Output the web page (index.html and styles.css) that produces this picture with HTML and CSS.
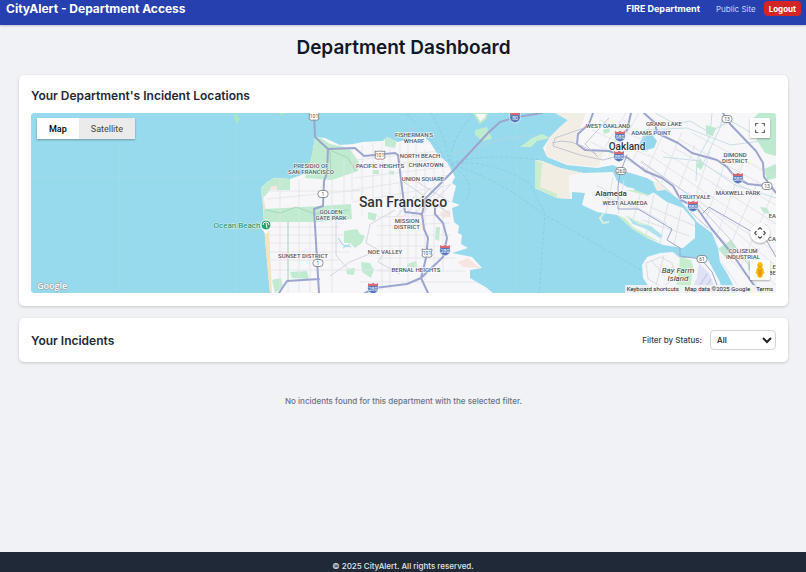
FILE: index.html
```html
<!DOCTYPE html>
<html lang="en">
<head>
<meta charset="utf-8">
<meta name="viewport" content="width=device-width, initial-scale=1">
<title>CityAlert - Department Access</title>
<link rel="stylesheet" href="styles.css">
</head>
<body>
<header class="topbar">
  <span class="brand">CityAlert - Department Access</span>
  <nav class="topnav">
    <span class="dept">FIRE Department</span>
    <a class="public-link" href="#">Public Site</a>
    <button class="logout" type="button">Logout</button>
  </nav>
</header>
<main class="content">
  <h1 class="page-title">Department Dashboard</h1>
  <section class="card">
    <h2 class="card-title">Your Department's Incident Locations</h2>
    <div class="map">
      <svg class="map-canvas" viewBox="31 113 745 180" preserveAspectRatio="xMidYMid slice" role="img" aria-label="Map of San Francisco and Oakland">
        <defs>
          <clipPath id="sf"><path d="M270 293L268 272 265 238 263 205 261 188 267 182 274 178 290 179 307 173 312 155 315 137 325 138 340 145 353 144 363 142 383 141 387 137 398 142 422 135 430 142 438 155 447 162 455 177 452 183 456 186 452 202 460 205 452 208 454 222 459 226 458 233 462 235 461 244 468 248 452 253 472 257 482 268 470 270 470 278 487 288 493 293Z"/></clipPath>
          <clipPath id="east"><path d="M555 113L568 120 560 127 550 137 543 148 547 157 567 165 597 168 613 165 627 172 647 178 660 186 680 200 697 222 712 233 718 248 720 262 728 275 737 293H776V113Z"/></clipPath>
          <g id="interstate"><path d="M-5-5Q-3-3 0-5Q3-3 5-5L5-2Q7 4 0 6Q-7 4-5-2Z" fill="#5378bd" stroke="#fff" stroke-width=".7"/><path d="M-5-5Q-3-3 0-5Q3-3 5-5V-2H-5Z" fill="#d66a70"/></g>
          <g id="us"><path d="M-5-4Q-3-3 0-4Q3-3 5-4Q4 0 5 3Q3 5 0 4Q-3 5-5 3Q-4 0-5-4Z" fill="#fff" stroke="#73777e" stroke-width=".8"/></g>
          <g id="state"><rect x="-5" y="-3.500" width="10" height="7" rx="3" fill="#fff" stroke="#73777e" stroke-width=".8"/></g>
        </defs>
        <rect x="-200" y="0" width="1400" height="420" fill="#98daed"/>
        <path d="M119 113V293M236 113V293M354 113V293M517 113V293M31 177H776" stroke="#a4dceb" stroke-width=".6"/>
        <!-- ferry routes -->
        <path d="M447 162Q435 140 405 113M449 162Q445 135 431 113M450 162Q452 135 475 113M451 163Q485 153 540 160M451 164Q490 158 530 184L545 214 539 293M451 165Q480 184 464 202Q458 208 454 202M451 164Q500 180 540 212L650 275" fill="none" stroke="#82c7dd" stroke-width=".7" stroke-dasharray="3 2"/>
        <path d="M450 155L510 137 542 135" fill="none" stroke="#b5d3e2" stroke-width=".8"/>
        <path d="M234 113L240 118 237 124 234 118M278 113L282 116 284 113" fill="#a9e5bd"/>
        <path d="M474 113L480 123 486 118 487 113Z" fill="#f8f8f5" stroke="#b9e9c7" stroke-width="2"/>
        <path d="M475 130L487 127 492 139 482 141 475 135Z" fill="#bcebd0"/><path d="M520 147L532 138 542 134 550 138 537 141 531 147Z" fill="#c6efd0"/>
        <!-- San Francisco -->
        <g clip-path="url(#sf)">
          <rect x="255" y="113" width="250" height="180" fill="#f7f7f9"/>
          <path d="M261 182L269 230 272 293H269L264 238 261 190Z" fill="#f5e3bb"/>
          <path d="M262 182L279 177 290 179 290 190 270 190 264 197 260 194ZM264 209L320 206 351 204 352 219 316 222 264 222ZM315 134L330 144 349 148 359 162 358 171 332 180 305 178 313 150ZM385 136L397 139 395 148 385 146ZM344 231L357 229 360 234 365 236 362 243 355 248 350 243 344 243ZM368 212L377 214 375 221 368 219ZM346 269L355 268 354 275 347 274ZM361 262L370 263 374 270 371 278 362 272ZM272 280L281 278 283 287 275 293ZM290 272L307 271 309 279 292 278ZM407 264L416 261 418 267 407 267ZM373 170L379 170 379 174 373 174ZM389 171L394 171 394 175 389 174ZM436 227L440 227 439 241 435 239Z" fill="#c1ebd1"/>
          <path d="M270 187L277 185 277 190 270 190ZM440 212L450 210 451 217 442 218ZM457 262L468 258 480 268 463 267Z" fill="#f8e5df"/>
          <path d="M266 191H365M267 199L360 190M268 227H340M269 235H345M269 243H340M269 252H350M270 260H340M270 270H390M280 180V293M288 222V293M299 180V293M310 222V293M332 180V293M344 160V205M352 150V200M362 145V215M373 143V208M382 143V290M390 143V290M400 143V270M408 143V285M416 145V270M425 150V280M434 155V270M443 165V270M355 160L450 150M355 169L452 157M354 178L453 166M352 190L450 175M352 202L450 185M377 217L450 215M377 226L450 223M377 235H450M377 246H453M377 258H455M377 271H465M360 282H480" fill="none" stroke="#e2e3ea" stroke-width=".8"/>
          <path d="M397 216L415 196M404 216L430 188M412 216L442 186M420 216L451 184M404 182L450 214M414 180L450 202M369 225L395 210M370 225L366 243 379 250 350 262 330 276M385 252L378 262 400 274M336 210V255L347 268" fill="none" stroke="#ced1df" stroke-width=".9"/>
          <path d="M266 210L280 213 296 207 315 214 349 210M319 142L332 151 348 158 356 171M330 151L331 175" fill="none" stroke="#9bcdb0" stroke-width=".7"/>
          <path d="M288 222V280" stroke="#a8d9c0" stroke-width="1"/>
          <path d="M338 238L343 245 351 247M343 248L350 244" stroke="#91d6df" stroke-width="1" fill="none"/>
        </g>
        <g fill="none" stroke="#9ca5ce" stroke-width="2" stroke-linejoin="round" stroke-linecap="round">
          <path d="M314 113L315 137 328 149 355 148 364 156 395 153 398 155 405 212 422 214"/>
          <path d="M328 149L327 173 324 181 323 206 314 209 319 293M279 293L287 281 319 279"/>
          <path d="M425 202L422 214 424 229 428 238 426 258 421 278 428 293M365 293L375 288 407 284 421 278 443 257 447 238 443 223 435 214 435 206"/>
          <path d="M424 200L449 175 488 133 500 122 517 117 542 113"/>
        </g>
        <!-- Oakland and Alameda -->
        <g clip-path="url(#east)">
          <rect x="535" y="113" width="245" height="180" fill="#f7f7f9"/>
          <path d="M550 113H586L575 140 580 148 604 151 598 167 567 164 545 156Z" fill="#f2eee6"/>
          <path d="M759 113H776V156L765 153 757 140 750 121ZM706 125L716 128 713 136 706 134ZM700 158L704 164 701 170 696 166ZM764 169L776 164V178L767 180ZM760 207L767 208 770 214 764 213ZM718 249L731 240 736 247 725 257ZM748 260L755 263 756 274 748 270ZM603 130L609 128 610 132 604 134Z" fill="#bceace"/>
          <path d="M643 136L650 132 657 141 654 148 642 151 639 145Z" fill="#94d9eb"/>
          <path d="M600 120L640 139M592 130L650 157M591 142L660 177M626 113L605 147M639 113L615 153M654 118L632 162M667 126L645 174M682 132L661 183M695 145L676 195M710 152L690 213M727 156L705 223M743 163L716 238M758 181L726 255M775 188L741 266M640 162L776 252M648 154L776 240M661 150L776 224M676 149L776 205M680 140L776 192M692 133L776 177M688 192L776 266M699 220L776 285M705 235L765 293M720 260L743 293" fill="none" stroke="#dddfe8" stroke-width=".8"/>
          <path d="M655 113L675 124 690 121 709 132 731 121 750 132M645 130L687 128 731 145 769 140M663 157L700 161 735 185 776 198M712 113L710 136 697 160 696 181M724 113L720 128 702 166" fill="none" stroke="#c6dfe4" stroke-width="1"/>
          <path d="M641 161L689 195 729 238 758 278M642 166L708 228" fill="none" stroke="#c8cbdc" stroke-width="1"/>
        </g>
        <path d="M535 160L542 161 560 168 583 173 613 172 617 181 627 187 653 192 667 202 683 208 695 222 695 238 683 248 663 245 647 238 633 228 617 215 597 212 582 205 585 193 572 192 572 199 557 198 535 188Z" fill="#f5f6f8"/>
        <path d="M535 160L542 161 560 168 583 173 569 175V188L571 199 557 198 535 188Z" fill="#f1ede3"/>
        <path d="M535 160L542 163 540 187 557 194 557 198 535 188ZM617 215L625 218 633 227 647 235 660 242 647 238 632 229ZM625 190L643 190 650 197 641 194Z" fill="#caedce"/>
        <path d="M596 185L667 224M602 196L646 212M606 213L613 177M618 214L624 180M632 224L641 192M646 235L654 194M660 243L668 203M674 246L681 210M642 220L690 236M650 207L695 226" stroke="#dcdfe6" stroke-width=".9"/>
        <path d="M626 173L638 178 648 182 656 191 649 195 635 190 628 182Z" fill="#98daed"/><path d="M653 183L660 182 665 190 657 191Z" fill="#f3eee5"/>
        <path d="M604 213L600 218 603 223 609 222M626 216L635 221 648 226 660 235" fill="none" stroke="#d8efdc" stroke-width="2"/>
        <path d="M628 217L639 224 651 226 663 236 660 238 646 229 633 224Z" fill="#aee2ec"/>
        <!-- Bay Farm Island -->
        <path d="M642 265L647 257 660 253 673 252 680 258 707 258 720 282 722 293H653L643 278Z" fill="#f5f6f8"/>
        <path d="M680 257L691 260 693 266 690 293H675L679 270Z" fill="#c7edcf"/><path d="M699 263L709 273 717 293H690L697 278Z" fill="#dfe1f4"/>
        <path d="M646 263L661 257 672 263 676 278 662 287 648 279ZM651 260L665 277M664 255L656 285" fill="none" stroke="#d6dae1" stroke-width=".9"/>
        <path d="M695 293L707 274M702 293L711 279" stroke="#c4cae5" stroke-width="1.200"/>
        <g fill="none" stroke="#9ca5ce" stroke-width="2" stroke-linejoin="round" stroke-linecap="round">
          <path d="M593 113L589 124 578 134 577 144 585 150 609 151 628 158 645 171 662 178 673 186 681 200 697 208 711 228 733 255 753 284 762 293"/>
          <path d="M631 113L627 130 620 136"/>
          <path d="M644 113L655 123 657 133 678 143 692 153 717 160 727 167 735 177 748 184 766 186"/>
          <path d="M723 113L730 124 756 151 763 163 764 177 776 193"/>
          <path d="M627 155L620 173 618 187V209H638L672 229 667 240 680 248V256L701 259 712 272 720 293" stroke-width="1"/>
          <path d="M703 213L709 207 754 233 764 236 776 257" stroke-width="1"/>
        </g>
        <g fill="none" stroke="#bdbfcf" stroke-width=".9"><path d="M584 128L555 138 553 146 580 155 603 160 618 156M609 118L585 144 598 157M552 143Q570 136 596 154"/></g>
        <!-- route shields -->
        <g class="shield">
          <use href="#us" x="314" y="116"/><text x="314" y="118">101</text>
          <use href="#us" x="380" y="155"/><text x="380" y="157">101</text>
          <use href="#us" x="427" y="253"/><text x="427" y="255">101</text>
          <use href="#state" x="323" y="194"/><text x="323" y="196">1</text>
          <use href="#state" x="318" y="263"/><text x="318" y="265">1</text>
          <use href="#state" x="621" y="171"/><text x="621" y="173">260</text>
          <use href="#state" x="727" y="119"/><text x="727" y="121">13</text>
          <use href="#state" x="767" y="186"/><text x="767" y="188">13</text>
          <use href="#state" x="702" y="259"/><text x="702" y="261">61</text>
        </g>
        <g class="shield shield-light">
          <use href="#interstate" x="515" y="117"/><text x="515" y="120">80</text>
          <use href="#interstate" x="445" y="250"/><text x="445" y="253">280</text>
          <use href="#interstate" x="373" y="288"/><text x="373" y="291">280</text>
          <use href="#interstate" x="620" y="136"/><text x="620" y="139">980</text>
          <use href="#interstate" x="619" y="156"/><text x="619" y="159">880</text>
          <use href="#interstate" x="738" y="178"/><text x="738" y="181">580</text>
          <use href="#interstate" x="693" y="206"/><text x="693" y="209">880</text>
        </g>
        <g class="area">
          <text x="414" y="137">FISHERMAN'S</text><text x="414" y="143">WHARF</text>
          <text x="420" y="158">NORTH BEACH</text><text x="380" y="168">PACIFIC HEIGHTS</text><text x="426" y="167">CHINATOWN</text>
          <text x="423" y="181">UNION SQUARE</text><text x="311" y="168">PRESIDIO OF</text><text x="311" y="174">SAN FRANCISCO</text>
          <text x="331" y="214">GOLDEN</text><text x="331" y="220">GATE PARK</text><text x="407" y="223">MISSION</text><text x="407" y="229">DISTRICT</text>
          <text x="303" y="258">SUNSET DISTRICT</text><text x="385" y="254">NOE VALLEY</text><text x="416" y="272">BERNAL HEIGHTS</text>
          <text x="608" y="128">WEST OAKLAND</text><text x="664" y="126">GRAND LAKE</text><text x="651" y="135">ADAMS POINT</text>
          <text x="735" y="157">DIMOND</text><text x="735" y="163">DISTRICT</text><text x="738" y="195">MAXWELL PARK</text><text x="695" y="199">FRUITVALE</text>
          <text x="625" y="205">WEST ALAMEDA</text><text x="743" y="253">COLISEUM</text><text x="743" y="259">INDUSTRIAL</text>
          <g class="edge"><text x="776" y="218">EA</text><text x="776" y="241">CA</text><text x="776" y="269">E</text><text x="776" y="275">BE</text></g>
        </g>
        <text class="place city-main" x="403" y="207">San Francisco</text>
        <text class="place city" x="627" y="150">Oakland</text>
        <text class="place town" x="611" y="196">Alameda</text>
        <text class="place island" x="678" y="273">Bay Farm</text><text class="place island" x="678" y="281">Island</text>
        <text class="place beach" x="237" y="228">Ocean Beach</text>
        <path d="M266 234L261 228H271Z" fill="#fff"/><circle cx="266" cy="225" r="5" fill="#26a269" stroke="#fff"/>
        <path d="M263 225A3 3 0 0 1 269 225M266 223L267 228" fill="none" stroke="#fff" stroke-width="1"/>
        <text class="google" x="37" y="289">Google</text>
      </svg>
      <div class="map-types">
        <button class="map-type active" type="button">Map</button>
        <button class="map-type" type="button">Satellite</button>
      </div>
      <button class="map-control fullscreen" type="button" aria-label="Toggle fullscreen view">
        <svg viewBox="0 0 18 18" width="10" height="10"><path fill="#666" d="M0 0v6h2V2h4V0H0zm16 0h-4v2h4v4h2V0h-2zm0 16h-4v2h6v-6h-2v4zM2 12H0v6h6v-2H2v-4z"/></svg>
      </button>
      <button class="map-control camera" type="button" aria-label="Map camera controls">
        <svg viewBox="0 0 12 12" width="12" height="12" fill="none" stroke="#555" stroke-width="1.300"><path d="M4 2.500L6 .8 8 2.500M4 9.500L6 11.200 8 9.500M2.500 4L.8 6 2.500 8M9.500 4L11.200 6 9.500 8"/></svg>
      </button>
      <button class="map-control pegman" type="button" aria-label="Street View">
        <svg viewBox="0 0 10 16" width="10" height="16"><path d="M2 6Q5 4 8 6L9.500 11 8 12 7 15.500H3L2 12 .5 11Z" fill="#fbbc04"/><path d="M3 6L5 8 7 6 7 11 6 15H4L3 11Z" fill="#e59a0b"/><circle cx="5" cy="3" r="2.700" fill="#fbbc04"/><path d="M3 4.500Q5 6.500 7 4.500" stroke="#d88b0b" fill="none"/></svg>
      </button>
      <div class="attribution"><a href="#">Keyboard shortcuts</a><span>Map data ©2025 Google</span><a href="#">Terms</a></div>
    </div>
  </section>
  <section class="card incidents">
    <h2 class="card-title">Your Incidents</h2>
    <div class="filter">
      <label for="status">Filter by Status:</label>
      <select id="status"><option>All</option></select>
    </div>
  </section>
  <p class="empty">No incidents found for this department with the selected filter.</p>
</main>
<footer class="footer">© 2025 CityAlert. All rights reserved.</footer>
</body>
</html>
```
FILE: styles.css
```css
* { box-sizing: border-box; }
body {
  display: flex;
  flex-direction: column;
  min-height: 100vh;
  margin: 0;
  background: #f0f2f6;
  color: #111827;
  font-family: Inter, "Liberation Sans", sans-serif;
  font-size: 8px;
}
button, select { font: inherit; }
h1, h2, p { margin: 0; }
a { color: inherit; text-decoration: none; }

.topbar {
  display: flex;
  align-items: center;
  justify-content: space-between;
  padding: 1px 5px 9px 6px;
  background: #2640af;
  color: #fff;
  box-shadow: 0 1px 2px rgba(30, 40, 90, .25);
}
.brand { font-size: 12px; font-weight: 700; line-height: 15px; }
.topnav { display: flex; align-items: center; }
.dept { font-size: 9px; font-weight: 700; margin-right: 16px; }
.public-link { color: #bfdbfe; margin-right: 8px; }
.logout {
  height: 15px;
  padding: 0 5px;
  border: 0;
  border-radius: 4px;
  background: #d42424;
  color: #fff;
  font-weight: 700;
}

.content { flex: 1; padding: 10px 18px 0 19px; }
.page-title {
  margin-bottom: 15px;
  font-size: 19px;
  font-weight: 600;
  line-height: 25px;
  text-align: center;
}
.card {
  margin-bottom: 12px;
  padding: 12px;
  border-radius: 5px;
  background: #fff;
  box-shadow: 0 1px 3px rgba(0, 0, 0, .18);
}
.card-title { color: #1f2937; font-size: 12px; font-weight: 600; line-height: 17px; }

.map {
  position: relative;
  height: 180px;
  margin-top: 9px;
  margin-bottom: 1px;
  overflow: hidden;
  border-radius: 4px;
  background: #98daed;
  font-family: Roboto, sans-serif;
}
.map-canvas { display: block; width: 100%; height: 100%; }
.map-canvas text { text-anchor: middle; font-family: Roboto, sans-serif; }
.area text {
  fill: #50555d;
  font-size: 6px;
  font-weight: 500;
  stroke: #fff;
  stroke-width: 1px;
  paint-order: stroke;
}
.area .edge text { text-anchor: end; }
.shield text { fill: #555; font-size: 5px; }
.shield-light text { fill: #fff; }
.place { fill: #30343a; stroke: #fff; stroke-width: 1px; paint-order: stroke; }
.city-main { font-size: 14px; font-weight: 500; }
.city { font-size: 10px; font-weight: 500; }
.town { font-size: 8px; font-weight: 500; }
.island { font-size: 8px; font-style: italic; }
.beach { fill: #16875b; font-size: 8px; stroke: #d9f2ee; }
.map-canvas .google {
  fill: #fff;
  font-family: "Open Sans", sans-serif;
  font-size: 9px;
  font-weight: 600;
  stroke: #8d9ca3;
  stroke-width: 1px;
  paint-order: stroke;
  text-anchor: start;
}
.map-types {
  position: absolute;
  top: 5px;
  left: 6px;
  display: flex;
  box-shadow: 0 1px 2px rgba(0, 0, 0, .3);
}
.map-type {
  height: 21px;
  padding: 0 12px;
  border: 0;
  background: #ebebeb;
  color: #444;
  font-size: 9px;
}
.map-type.active { background: #fff; color: #000; font-weight: 500; }
.map-control {
  position: absolute;
  right: 6px;
  display: grid;
  place-items: center;
  width: 20px;
  height: 20px;
  padding: 0;
  border: 0;
  border-radius: 1px;
  background: #fff;
  box-shadow: 0 1px 2px rgba(0, 0, 0, .3);
}
.fullscreen { top: 5px; }
.camera { bottom: 50px; border-radius: 50%; }
.pegman { bottom: 13px; }
.attribution {
  position: absolute;
  right: 0;
  bottom: 0;
  display: flex;
  gap: 6px;
  padding: 0 3px 0 2px;
  background: rgba(245, 245, 245, .85);
  color: #222;
  font-size: 6px;
  line-height: 8px;
}

.incidents { display: flex; align-items: center; justify-content: space-between; }
.filter { display: flex; align-items: center; gap: 8px; color: #374151; font-weight: 500; }
.filter select {
  width: 66px;
  height: 20px;
  padding: 0 2px;
  border: 1px solid #d1d5db;
  border-radius: 4px;
  background: #fff;
  color: #222;
}
.empty { padding: 21px 0; color: #6b7280; font-weight: 500; line-height: 12px; text-align: center; }
.footer {
  padding-top: 8px;
  background: #1f2937;
  color: #e1e4e9;
  font-weight: 500;
  line-height: 12px;
  text-align: center;
}
```
